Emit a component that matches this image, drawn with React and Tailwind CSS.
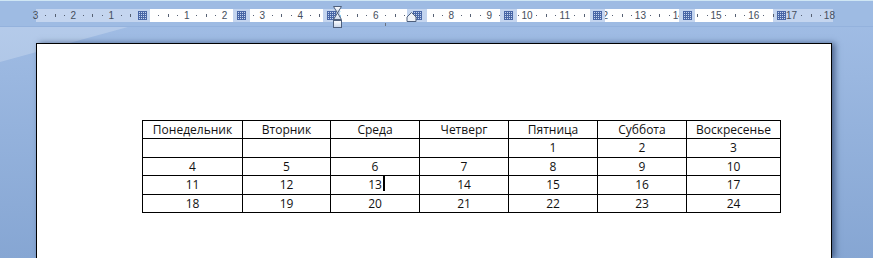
import React from "react";

const CM = 37.8;
const ORIGIN = 149;
const RULER_LEFT = 36;

const days = ["Понедельник", "Вторник", "Среда", "Четверг", "Пятница", "Суббота", "Воскресенье"];
const weeks = [
  ["", "", "", "", "1", "2", "3"],
  ["4", "5", "6", "7", "8", "9", "10"],
  ["11", "12", "13", "14", "15", "16", "17"],
  ["18", "19", "20", "21", "22", "23", "24"],
];

// ruler segments left to right: m = page margin, c = cell content, b = cell boundary
const segments = [
  ["m", 114],
  ["c", 83],
  ["b", 17],
  ["c", 73],
  ["b", 17],
  ["c", 67],
  ["b", 20],
  ["c", 73],
  ["b", 17],
  ["c", 73],
  ["b", 15],
  ["c", 74],
  ["b", 16],
  ["c", 78],
  ["m", 60],
];

function GridMark() {
  return (
    <svg width="9" height="9" viewBox="0 0 9 9" className="shrink-0">
      {[0, 2, 4, 6, 8].map((v) => (
        <g key={v}>
          <rect x={v} y="0" width="1" height="9" fill="#4866a6" />
          <rect x="0" y={v} width="9" height="1" fill="#4866a6" />
        </g>
      ))}
    </svg>
  );
}

function RulerMarks() {
  const items = [];
  for (let q = -12; q <= 72; q++) {
    const x = ORIGIN + (q * CM) / 4 - RULER_LEFT;
    if (q % 4 === 0) {
      if (q === 0) continue;
      items.push(
        <span
          key={q}
          className="absolute top-[1px] w-[20px] -ml-[10px] text-center text-[10px] leading-[11px] text-[#454e5c]"
          style={{ left: x }}
        >
          {Math.abs(q / 4)}
        </span>
      );
    } else if (Math.abs(q % 4) === 2) {
      items.push(
        <span key={q} className="absolute top-[5px] w-px h-[3px] bg-[#566072]" style={{ left: Math.round(x) }} />
      );
    } else {
      items.push(
        <span key={q} className="absolute top-[6px] w-px h-px bg-[#566072]" style={{ left: Math.round(x) }} />
      );
    }
  }
  return items;
}

function Ruler() {
  return (
    <div className="relative ml-[36px] mt-[8px] w-[797px] h-[13px] font-['Liberation_Sans',sans-serif]">
      {/* base strip */}
      <div className="absolute inset-0 flex">
        {segments.map(([k, w], i) => (
          <div
            key={i}
            className={k === "c" ? "h-full bg-white" : "h-full bg-[#c4d5ef]"}
            style={{ width: w }}
          />
        ))}
      </div>
      <RulerMarks />
      {/* cell boundaries cover the scale; margins keep it */}
      <div className="absolute inset-0 flex">
        {segments.map(([k, w], i) => (
          <div
            key={i}
            className={
              k === "b"
                ? "h-full flex items-center justify-center bg-[#c4d5ef]"
                : k === "m" && i === 0
                ? "h-full flex items-center justify-end pr-[3px]"
                : k === "m"
                ? "h-full flex items-center pl-[4px]"
                : "h-full"
            }
            style={{ width: w }}
          >
            {k !== "c" && <GridMark />}
          </div>
        ))}
      </div>
      {/* first-line / hanging / left indent marker */}
      <svg className="absolute left-[296px] top-[-3px]" width="11" height="23" viewBox="0 0 11 23">
        <defs>
          <linearGradient id="ind" x1="0" y1="0" x2="0" y2="1">
            <stop offset="0" stopColor="#ffffff" />
            <stop offset="1" stopColor="#c9d6ea" />
          </linearGradient>
        </defs>
        <path d="M1.5 0.5 H9.5 L5.5 7 Z" fill="url(#ind)" stroke="#4f607c" />
        <path d="M5.5 7 L9.5 13.5 H1.5 Z" fill="url(#ind)" stroke="#4f607c" />
        <rect x="1.5" y="14.5" width="8" height="7" fill="url(#ind)" stroke="#4f607c" />
      </svg>
      {/* right indent marker */}
      <svg className="absolute left-[370px] top-[3px]" width="11" height="11" viewBox="0 0 11 11">
        <path d="M5.5 0.5 L10 5 V9.5 H1 V5 Z" fill="#eef2f8" stroke="#4f607c" />
      </svg>
      {/* caret column mark under the ruler */}
      <span className="absolute left-[349px] top-[14px] w-px h-[3px] bg-[#6b7280]" />
    </div>
  );
}

function CalendarTable() {
  return (
    <div className="grid grid-cols-[100px_88px_89px_89px_89px_89px_94px] grid-rows-[18px_19px_18px_19px_18px] w-[639px] border-l border-t border-black font-['Open_Sans',sans-serif] text-[12px] text-[#111111]">
      {days.map((d) => (
        <div key={d} className="flex items-center justify-center border-r border-b border-black leading-none">
          {d}
        </div>
      ))}
      {weeks.flat().map((v, i) => (
        <div key={i} className="flex items-center justify-center border-r border-b border-black leading-none">
          {v === "13" ? (
            <span className="relative">
              13
              <span className="absolute left-full top-[-3px] ml-px w-[2px] h-[15px] bg-black" />
            </span>
          ) : (
            v
          )}
        </div>
      ))}
    </div>
  );
}

export default function App() {
  return (
    <div className="relative flex flex-col w-[873px] h-[258px] overflow-hidden bg-[linear-gradient(180deg,#a2bee6_0%,#9ab7e0_30%,#86a6d3_100%)]">
      <div className="h-px bg-[#cfe6f4]" />
      <div className="h-[26px] bg-[#9ebbe3] border-b border-[#94b2dd]">
        <Ruler />
      </div>
      {/* soft highlight sweep on the workspace */}
      <svg className="absolute left-0 top-[27px]" width="140" height="40" viewBox="0 0 140 40">
        <path d="M0 0 H128 L0 35 Z" fill="#ffffff" fillOpacity="0.22" />
      </svg>
      <div className="relative mt-[16px] ml-[36px] w-[796px] flex-1 bg-white border border-b-0 border-black shadow-[3px_0_6px_rgba(25,45,85,0.6)] pl-[105px] pt-[76px]">
        <CalendarTable />
      </div>
    </div>
  );
}
